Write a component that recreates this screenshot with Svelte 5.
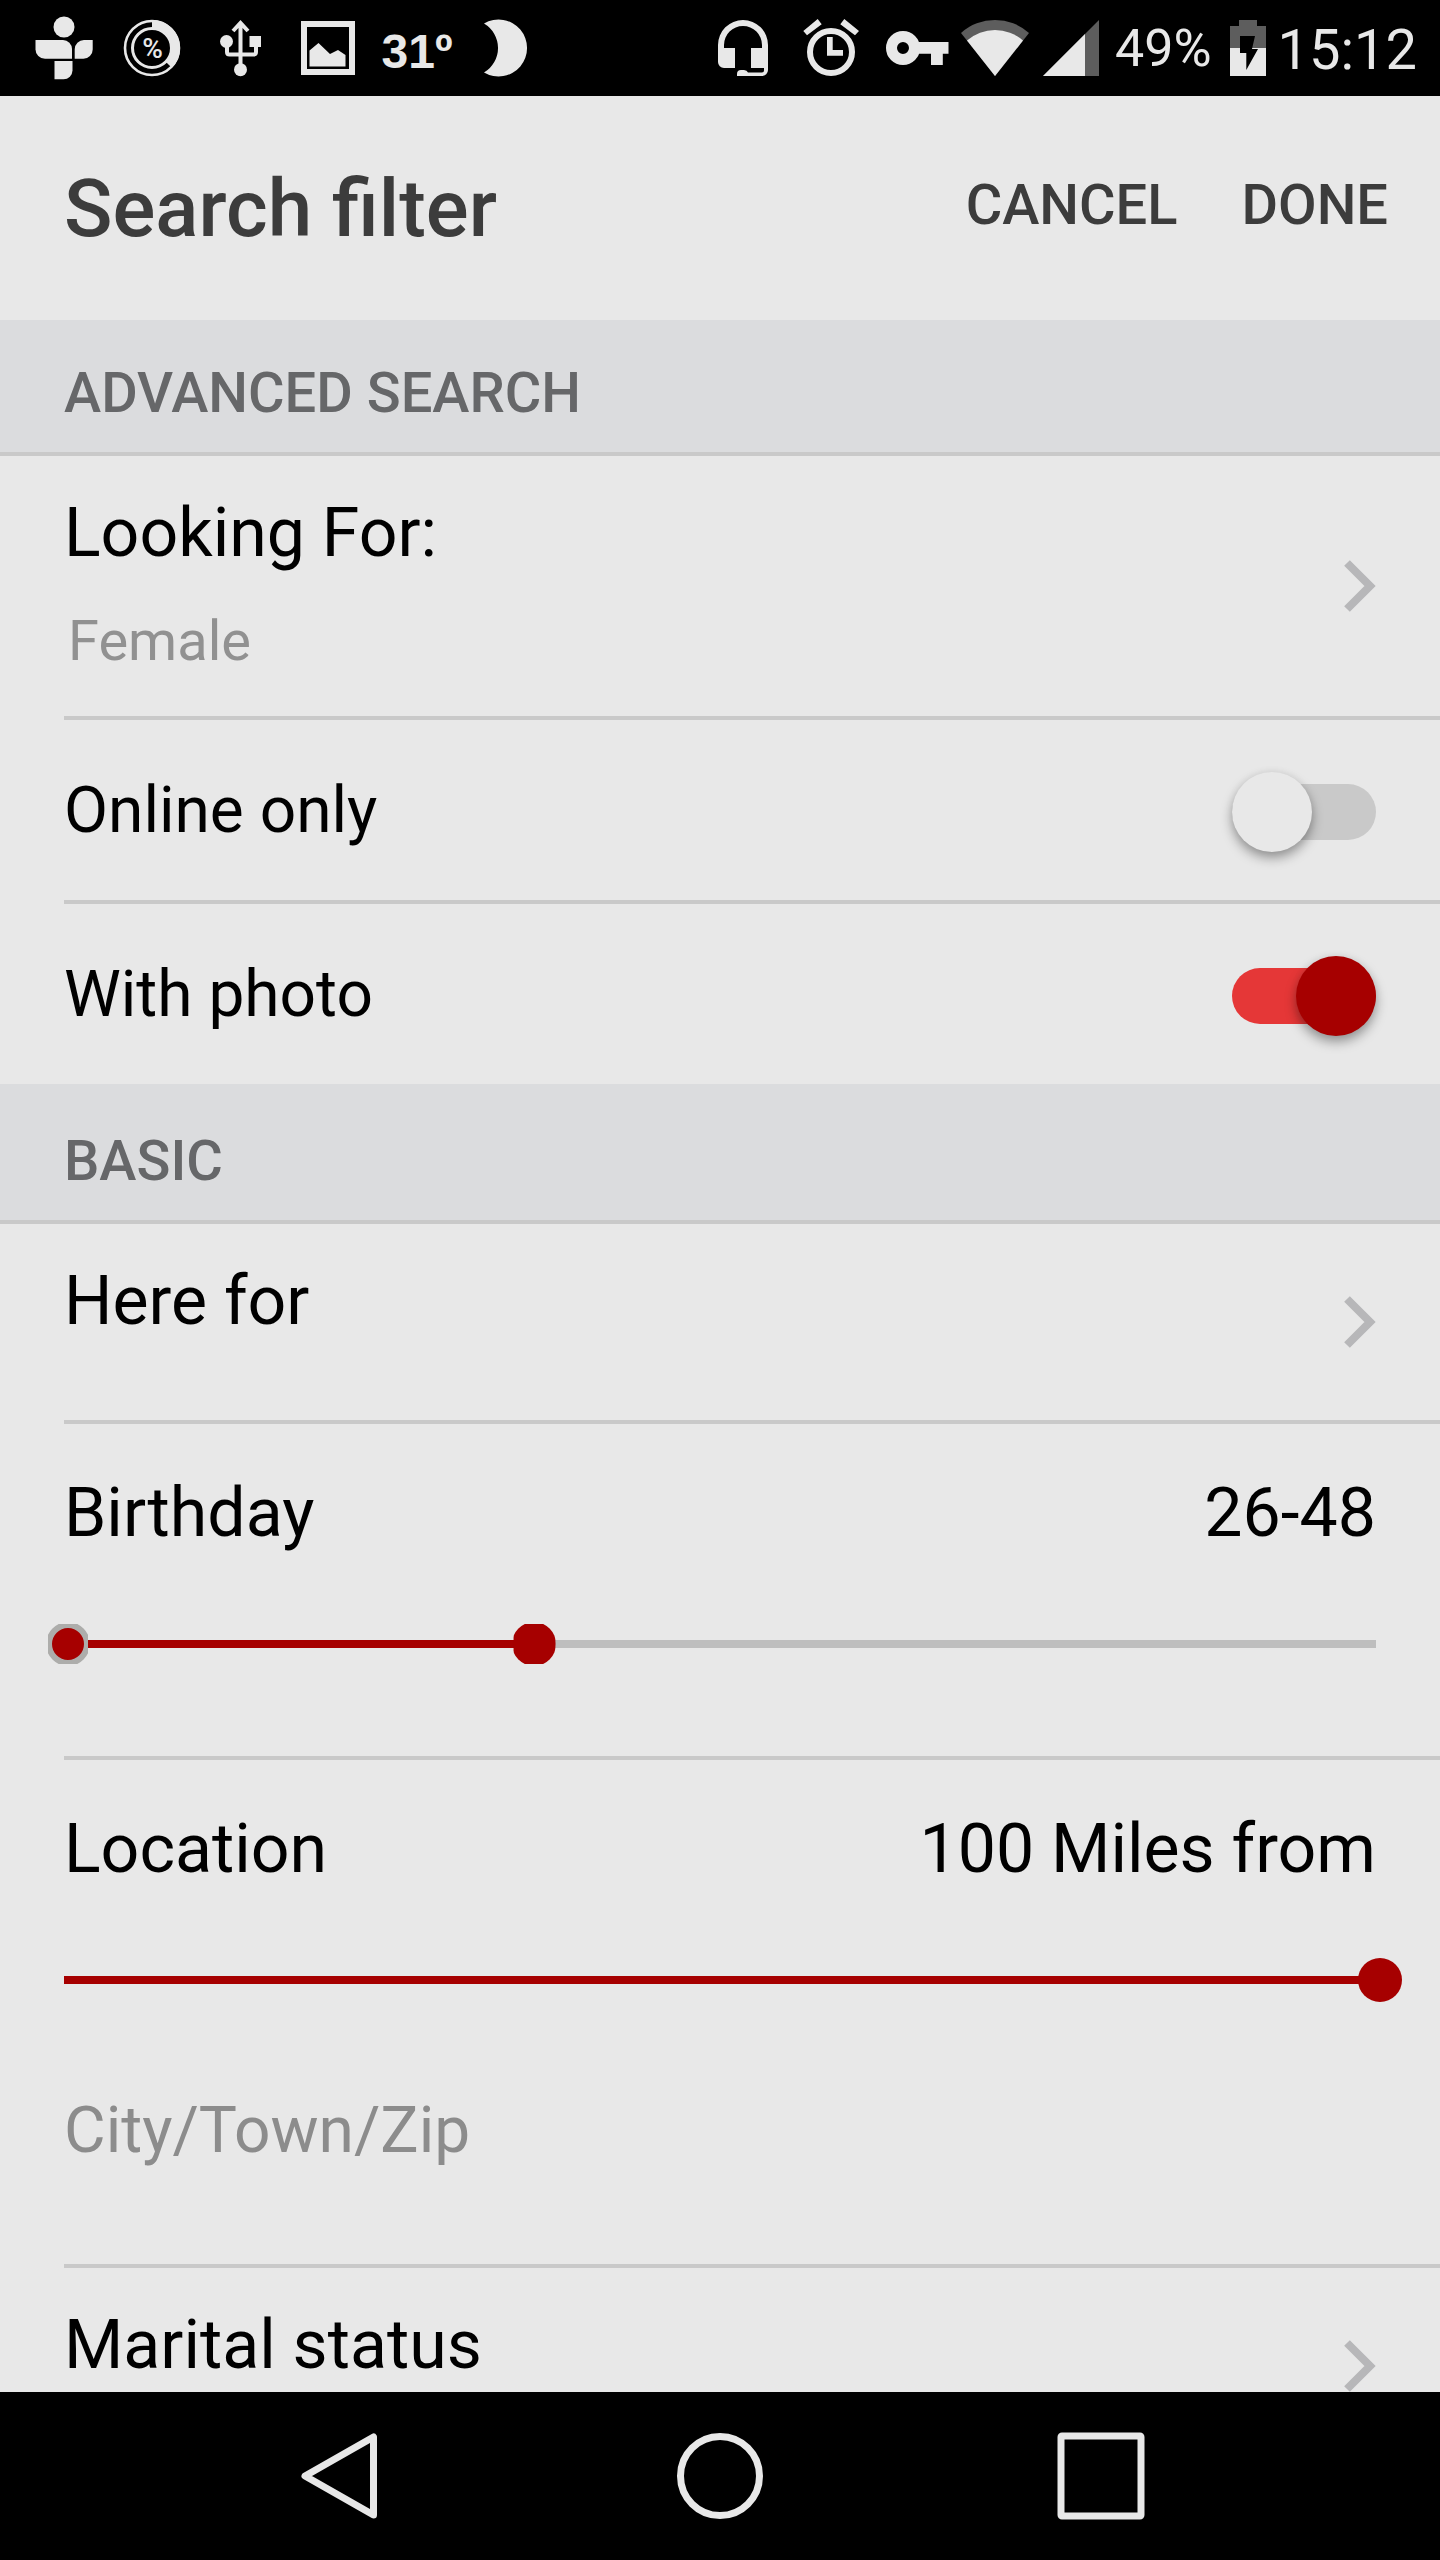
<script>
  const AGE_MIN = 26;
  const AGE_MAX = 88;
  const DISTANCE_MAX = 100;

  let onlineOnly = $state(false);
  let withPhoto = $state(true);
  let ageFrom = $state(26);
  let ageTo = $state(48);
  let distance = $state(100);
  let city = $state('');

  const share = (age) => ((age - AGE_MIN) / (AGE_MAX - AGE_MIN)) * 100;
  const ageStart = $derived(share(ageFrom));
  const ageWidth = $derived(share(ageTo) - share(ageFrom));
  const distanceWidth = $derived((distance / DISTANCE_MAX) * 100);
</script>

{#snippet chevron()}
  <svg class="chevron" viewBox="0 0 32 52" aria-hidden="true">
    <path d="M3 3 26 26 3 49" />
  </svg>
{/snippet}

<div class="screen">
  <div class="status">
    <div class="status-group">
      <svg width="88" height="96" viewBox="20 0 88 96" aria-hidden="true">
        <circle cx="64" cy="27" r="10.500" />
        <path d="M35.500 40H63a9 9 0 0 1 9 9v9.700H45a9.500 9.500 0 0 1-9.500-9.500z" />
        <path d="M92.700 40H84a9.300 9.300 0 0 0-9.300 9.300v9.400h8.700a9.300 9.300 0 0 0 9.300-9.300z" />
        <path d="M54.500 61h18v9.300a9 9 0 0 1-9 9h-9z" />
      </svg>
      <svg width="92" height="96" viewBox="108 0 92 96" aria-hidden="true">
        <circle class="line" cx="152" cy="48" r="27" stroke-width="2.600" />
        <circle class="line" cx="152" cy="48" r="19.500" stroke-width="3" />
        <path class="line" d="M152 24A24 24 0 0 1 169 65" stroke-width="8" />
        <text class="percent" x="152.500" y="58" text-anchor="middle">%</text>
      </svg>
      <svg width="80" height="96" viewBox="200 0 80 96" aria-hidden="true">
        <path class="line" d="M240.500 23V66M233 31l7.500-8 7.500 8" stroke-width="4" />
        <path class="line" d="M227 44v8q0 2.500 2.500 2.500h24q2.500 0 2.500-2.500v-8" stroke-width="4" />
        <circle cx="226.500" cy="41.500" r="6.500" />
        <circle cx="240.500" cy="69.700" r="6.500" />
        <path d="M249.500 36H261v11h-11.500z" />
      </svg>
      <svg width="96" height="96" viewBox="280 0 96 96" aria-hidden="true">
        <path class="line" d="M304 24h48v48h-48z" stroke-width="6" />
        <path d="M309.500 66.500v-16l9-7.500L330 54l8-4 7.500 5v11.500z" />
      </svg>
      <span class="temperature">31º</span>
      <svg width="80" height="96" viewBox="458 0 80 96" aria-hidden="true">
        <path d="M484 23.500A28.500 28.500 0 1 1 484 72.500A28.400 28.400 0 0 0 484 23.500z" />
      </svg>
    </div>
    <div class="status-group">
      <svg width="82" height="96" viewBox="704 0 82 96" aria-hidden="true">
        <path d="M718 45a25 25 0 0 1 50 0v3h-6v-3a19 19 0 0 0-38 0v3h11v20h-11a6 6 0 0 1-6-6z" />
        <path d="M751 48h17v22a6 6 0 0 1-6 6h-25v-2q0-4 4-4h3q3 0 4 2.500h14a2 2 0 0 0 2-2V68h-13z" />
      </svg>
      <svg width="86" height="96" viewBox="786 0 86 96" aria-hidden="true">
        <circle class="line" cx="831" cy="52" r="21" stroke-width="6" />
        <path d="M827 37h5.700v13H843v5.700h-16zM803.300 31l14.400-12 4 5.300L807 35.300zM844.300 19 859 31l-4 4.300-14.700-11z" />
      </svg>
      <svg width="83" height="96" viewBox="872 0 83 96" aria-hidden="true">
        <circle class="line" cx="903" cy="48" r="11.500" stroke-width="11" />
        <path d="M916 42h32.500v11.700h-5.700V65H931V53.700h-15z" />
      </svg>
      <svg width="81" height="96" viewBox="955 0 81 96" aria-hidden="true">
        <path class="dim" d="M995 76 961 33A51 51 0 0 1 1029 33z" />
        <path d="M995 76 967 40.500A42.600 42.600 0 0 1 1023 40.500z" />
      </svg>
      <svg width="79" height="96" viewBox="1036 0 79 96" aria-hidden="true">
        <path class="dim" d="M1043 76l56-56v56z" />
        <path d="M1043 76l42-42v42z" />
      </svg>
      <span class="charge">49%</span>
      <svg width="66" height="96" viewBox="1211 0 66 96" aria-hidden="true">
        <path class="dim" d="M1238 20h18v6h9v22h-36V26h9z" />
        <path d="M1229 48h36v28h-36z" />
        <path class="bolt" d="M1239 36h15l-3 13h6l-11.700 21V53H1239z" />
      </svg>
      <span class="clock">15:12</span>
    </div>
  </div>

  <header>
    <h1>Search filter</h1>
    <div class="actions">
      <button type="button">CANCEL</button>
      <button type="button">DONE</button>
    </div>
  </header>

  <main>
    <h2>ADVANCED SEARCH</h2>
    <button type="button" class="row link tall">
      <span class="stack">
        <span>Looking For:</span>
        <span class="value">Female</span>
      </span>
      {@render chevron()}
    </button>
    <label class="row toggle">
      <span>Online only</span>
      <input type="checkbox" bind:checked={onlineOnly} />
    </label>
    <label class="row toggle last">
      <span>With photo</span>
      <input type="checkbox" bind:checked={withPhoto} />
    </label>

    <h2 class="following">BASIC</h2>
    <button type="button" class="row link">
      <span class="stack"><span>Here for</span></span>
      {@render chevron()}
    </button>
    <section class="row block">
      <div class="caption">
        <label for="age-from">Birthday</label>
        <output for="age-from age-to">{ageFrom}-{ageTo}</output>
      </div>
      <div class="slider pair">
        <div class="track">
          <div class="fill" style="margin-left: {ageStart}%; width: calc({ageWidth}% + 4px)"></div>
        </div>
        <input id="age-to" type="range" aria-label="Oldest age" min={AGE_MIN} max={AGE_MAX} bind:value={ageTo} />
        <input id="age-from" class="ringed" type="range" min={AGE_MIN} max={AGE_MAX} bind:value={ageFrom} />
      </div>
    </section>
    <section class="row block">
      <div class="caption">
        <label for="distance">Location</label>
        <output for="distance">{distance} Miles from</output>
      </div>
      <div class="slider">
        <div class="track">
          <div class="fill" style="width: {distanceWidth}%"></div>
        </div>
        <input id="distance" type="range" min="0" max={DISTANCE_MAX} bind:value={distance} />
      </div>
      <input class="city" type="text" aria-label="City, town or zip" placeholder="City/Town/Zip" bind:value={city} />
    </section>
    <button type="button" class="row link">
      <span class="stack"><span>Marital status</span></span>
      {@render chevron()}
    </button>
  </main>

  <nav aria-label="System">
    <button type="button" aria-label="Back">
      <svg width="96" height="96" viewBox="291 2428 96 96"><path d="M373.500 2437v78L305 2476z" /></svg>
    </button>
    <button type="button" aria-label="Home">
      <svg width="96" height="96" viewBox="672 2428 96 96"><circle cx="720" cy="2476" r="39.500" /></svg>
    </button>
    <button type="button" aria-label="Recent apps">
      <svg width="96" height="96" viewBox="1053 2428 96 96"><rect x="1061" y="2436" width="80" height="80" rx="1" /></svg>
    </button>
  </nav>
</div>

<style>
  :global(body) {
    margin: 0;
    background: #e8e8e8;
  }

  .screen {
    display: flex;
    flex-direction: column;
    height: 100vh;
    background: #e8e8e8;
    color: #000;
    font-family: Roboto, sans-serif;
    font-size: 68px;
    line-height: 80px;
  }

  button,
  input {
    margin: 0;
    padding: 0;
    border: 0;
    background: none;
    color: inherit;
    font: inherit;
  }

  button {
    cursor: pointer;
  }

  .status {
    display: flex;
    flex: none;
    justify-content: space-between;
    padding: 0 23px 0 20px;
    background: #000;
    color: #e8e8e8;
  }

  .status-group {
    display: flex;
    align-items: center;
    height: 96px;
  }

  .status svg {
    flex: none;
    fill: #e8e8e8;
  }

  .status .line {
    fill: none;
    stroke: #e8e8e8;
  }

  .status .dim {
    fill: #5d5d5d;
  }

  .status .bolt {
    fill: #000;
  }

  .percent {
    font-size: 28px;
    font-weight: 500;
  }

  .temperature {
    width: 82px;
    padding-top: 8px;
    font-family: "Liberation Sans", sans-serif;
    font-size: 48px;
    font-weight: 700;
    line-height: 64px;
    text-align: center;
  }

  .charge {
    padding-top: 2px;
    font-size: 52px;
    line-height: 64px;
  }

  .clock {
    padding-top: 4px;
    font-size: 56px;
    line-height: 64px;
  }

  header {
    display: flex;
    flex: none;
    align-items: center;
    justify-content: space-between;
    box-sizing: border-box;
    height: 224px;
    padding: 2px 52px 0 64px;
    color: #3c3c3c;
  }

  h1 {
    margin: 0;
    font-size: 80px;
    font-weight: 500;
    line-height: 96px;
  }

  .actions {
    display: flex;
    gap: 64px;
    padding-bottom: 8px;
    font-size: 56px;
    font-weight: 500;
    line-height: 64px;
  }

  main {
    flex: 1;
    min-height: 0;
    overflow: hidden;
  }

  h2 {
    margin: 0;
    padding: 41px 64px 27px;
    border-bottom: 4px solid #c9c9c9;
    background: #dbdcde;
    color: #666769;
    font-size: 56px;
    font-weight: 500;
    line-height: 64px;
  }

  h2.following {
    padding-top: 45px;
  }

  .row {
    box-sizing: border-box;
    margin-left: 64px;
    border-bottom: 4px solid #c9c9c9;
  }

  .link {
    display: flex;
    align-items: center;
    justify-content: space-between;
    width: calc(100% - 64px);
    min-height: 200px;
    padding-right: 64px;
    text-align: left;
  }

  .link.tall {
    min-height: 264px;
  }

  .stack {
    display: flex;
    flex-direction: column;
    align-self: flex-start;
    gap: 36px;
    padding-top: 37px;
  }

  .value {
    padding-left: 4px;
    color: #919191;
    font-size: 56px;
    line-height: 64px;
  }

  .chevron {
    flex: none;
    width: 32px;
    height: 52px;
    fill: none;
    stroke: #b7b7b9;
    stroke-width: 8;
  }

  .toggle {
    display: flex;
    align-items: center;
    justify-content: space-between;
    height: 184px;
    padding: 2px 64px 0 0;
    font-size: 64px;
    line-height: 76px;
  }

  .toggle.last {
    height: 180px;
    border-bottom: 0;
  }

  .toggle input {
    display: flex;
    align-items: center;
    width: 144px;
    height: 56px;
    margin-top: 2px;
    border-radius: 28px;
    background: #c9c9c9;
    appearance: none;
  }

  .toggle input::before {
    flex: none;
    width: 80px;
    height: 80px;
    border-radius: 50%;
    background: #e8e8e8;
    box-shadow: 0 6px 12px rgb(0 0 0 / 36%), 0 0 8px rgb(0 0 0 / 5%);
    content: "";
  }

  .toggle input:checked {
    justify-content: flex-end;
    background: #e53737;
  }

  .toggle input:checked::before {
    background: #a60000;
  }

  .block {
    padding: 49px 0 90px;
  }

  .caption {
    display: flex;
    justify-content: space-between;
    padding-right: 64px;
  }

  /* The slider is wider than the track so that each thumb can overhang its ends. */
  .slider {
    display: grid;
    align-items: center;
    margin: 69px 38px 0 -18px;
  }

  .slider > * {
    grid-area: 1 / 1;
  }

  .track {
    height: 8px;
    margin: 0 26px 0 18px;
    background: #bebebe;
  }

  .fill {
    height: 8px;
    background: #a60000;
  }

  .slider input {
    width: 100%;
    height: 44px;
    appearance: none;
    pointer-events: none;
  }

  .slider input::-webkit-slider-thumb {
    width: 44px;
    height: 44px;
    border-radius: 50%;
    background: #a60000;
    appearance: none;
    pointer-events: auto;
  }

  .pair input::-webkit-slider-thumb {
    clip-path: inset(2px 0 2px 2px);
  }

  .pair .ringed::-webkit-slider-thumb {
    box-sizing: border-box;
    border: 6px solid #adadab;
    clip-path: inset(2px);
  }

  .city {
    display: block;
    width: calc(100% - 64px);
    height: 76px;
    margin-top: 91px;
    margin-bottom: 5px;
    font-size: 64px;
    line-height: 76px;
  }

  .city::placeholder {
    color: #8c8c8c;
    opacity: 1;
  }

  nav {
    display: flex;
    flex: none;
    justify-content: center;
    height: 168px;
    background: #000;
  }

  nav button {
    display: flex;
    flex: 0 1 381px;
    align-items: center;
    justify-content: center;
  }

  nav svg {
    fill: none;
    stroke: #e8e8e8;
    stroke-width: 7;
    stroke-linejoin: round;
  }
</style>
